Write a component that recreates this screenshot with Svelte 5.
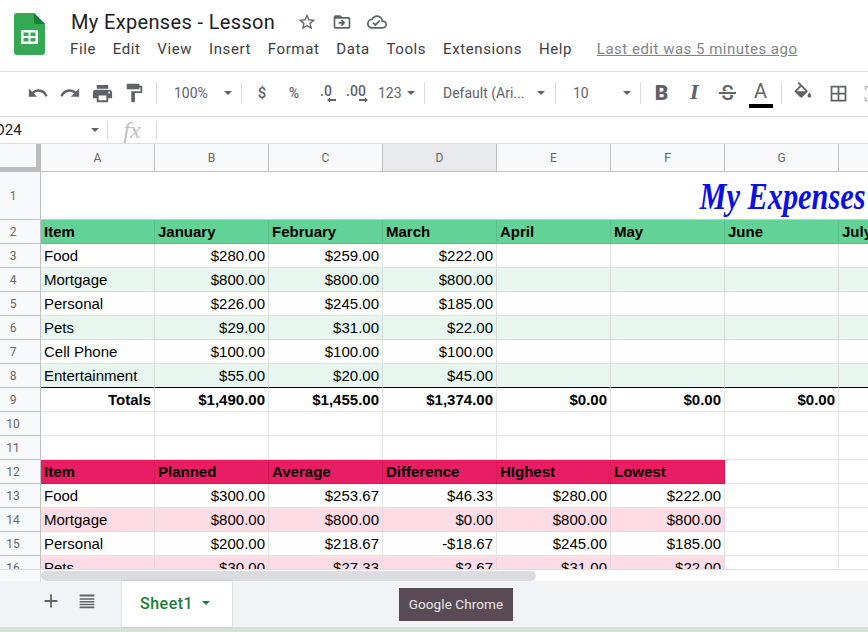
<script>
	const menus = ['File', 'Edit', 'View', 'Insert', 'Format', 'Data', 'Tools', 'Extensions', 'Help'];
	const cols = ['A', 'B', 'C', 'D', 'E', 'F', 'G', 'H'];

	// each row: number, tone, cells (missing ones are drawn blank up to H)
	const rows = [
		{ n: 2, tone: 'green', bold: true, cells: ['Item', 'January', 'February', 'March', 'April', 'May', 'June', 'July'], heading: true },
		{ n: 3, cells: ['Food', '$280.00', '$259.00', '$222.00'] },
		{ n: 4, tone: 'mint', cells: ['Mortgage', '$800.00', '$800.00', '$800.00', '', '', '', ''] },
		{ n: 5, cells: ['Personal', '$226.00', '$245.00', '$185.00'] },
		{ n: 6, tone: 'mint', cells: ['Pets', '$29.00', '$31.00', '$22.00', '', '', '', ''] },
		{ n: 7, cells: ['Cell Phone', '$100.00', '$100.00', '$100.00'] },
		{ n: 8, tone: 'mint', cells: ['Entertainment', '$55.00', '$20.00', '$45.00', '', '', '', ''], rule: true },
		{ n: 9, bold: true, cells: ['Totals', '$1,490.00', '$1,455.00', '$1,374.00', '$0.00', '$0.00', '$0.00'], totals: true },
		{ n: 10, cells: [] },
		{ n: 11, cells: [] },
		{ n: 12, tone: 'red', bold: true, cells: ['Item', 'Planned', 'Average', 'Difference', 'HIghest', 'Lowest'], heading: true },
		{ n: 13, cells: ['Food', '$300.00', '$253.67', '$46.33', '$280.00', '$222.00'] },
		{ n: 14, tone: 'pink', cells: ['Mortgage', '$800.00', '$800.00', '$0.00', '$800.00', '$800.00'] },
		{ n: 15, cells: ['Personal', '$200.00', '$218.67', '-$18.67', '$245.00', '$185.00'] },
		{ n: 16, tone: 'pink', cells: ['Pets', '$30.00', '$27.33', '$2.67', '$31.00', '$22.00'] }
	];

	const cellAt = (row, i) => row.cells[i] ?? '';
	const toneAt = (row, i) => (i < row.cells.length ? row.tone ?? '' : '');
	const alignAt = (row, i) => (row.heading || (i === 0 && !row.totals) ? 'left' : 'right');
</script>

<div class="page">
	<header class="top">
		<svg class="logo" viewBox="0 0 31 42" width="31" height="42" aria-hidden="true">
			<path d="M3 0h17l11 11v28a3 3 0 0 1-3 3H3a3 3 0 0 1-3-3V3a3 3 0 0 1 3-3z" fill="#34a853" />
			<path d="M20 0l11 11H22a2 2 0 0 1-2-2z" fill="#188038" />
			<path d="M7 17h17v14H7z M9.500 19.500v3.500h5v-3.500z M16.500 19.500v3.500h5v-3.500z M9.500 25v3.500h5V25z M16.500 25v3.500h5V25z" fill="#fff" fill-rule="evenodd" />
		</svg>
		<div class="doc">
			<div class="title-row">
				<span class="doc-title">My Expenses - Lesson</span>
				<div class="doc-icons">
					<svg viewBox="0 0 24 24" width="20" height="20"><path d="M22 9.240l-7.190-.620L12 2 9.190 8.630 2 9.240l5.460 4.730L5.820 21 12 17.270 18.180 21l-1.630-7.030L22 9.240zM12 15.400l-3.760 2.270 1-4.280-3.320-2.880 4.380-.380L12 6.100l1.710 4.040 4.380.380-3.320 2.880 1 4.280L12 15.400z" /></svg>
					<svg viewBox="0 0 24 24" width="20" height="20"><path d="M20 6h-8l-2-2H4c-1.100 0-2 .9-2 2v12c0 1.100.9 2 2 2h16c1.100 0 2-.9 2-2V8c0-1.100-.9-2-2-2zm0 12H4V8h16v10zm-8.010-9l-1.410 1.410L12.160 12H8v2h4.160l-1.590 1.590L11.990 17 16 13.010 11.990 9z" /></svg>
					<svg viewBox="0 0 24 24" width="20" height="20"><path d="M19.350 10.040C18.670 6.590 15.640 4 12 4 9.110 4 6.600 5.640 5.350 8.040 2.340 8.360 0 10.910 0 14c0 3.310 2.690 6 6 6h13c2.760 0 5-2.240 5-5 0-2.640-2.050-4.780-4.650-4.960zM19 18H6c-2.210 0-4-1.790-4-4 0-2.050 1.530-3.760 3.560-3.970l1.070-.110.5-.950C8.080 7.140 9.940 6 12 6c2.620 0 4.880 1.860 5.390 4.430l.3 1.500 1.530.110c1.560.1 2.780 1.410 2.780 2.960 0 1.650-1.350 3-3 3zm-9-3.820l-2.090-2.090L6.500 13.500 10 17l6.010-6.010-1.410-1.410z" /></svg>
				</div>
			</div>
			<nav class="menu">
				{#each menus as m}
					<span>{m}</span>
				{/each}
				<span class="last-edit">Last edit was 5 minutes ago</span>
			</nav>
		</div>
	</header>

	<div class="toolbar">
		<div class="tool"><svg viewBox="0 0 24 24" width="22" height="22"><path d="M12.500 8c-2.650 0-5.050.99-6.900 2.600L2 7v9h9l-3.620-3.620c1.390-1.160 3.160-1.880 5.120-1.880 3.540 0 6.550 2.310 7.600 5.500l2.370-.78C21.080 11.030 17.150 8 12.500 8z" /></svg></div>
		<div class="tool"><svg viewBox="0 0 24 24" width="22" height="22"><path d="M18.400 10.600C16.550 8.990 14.150 8 11.500 8c-4.650 0-8.580 3.030-9.960 7.220L3.900 16c1.050-3.190 4.050-5.500 7.600-5.500 1.950 0 3.730.72 5.120 1.880L13 16h9V7l-3.600 3.600z" /></svg></div>
		<div class="tool"><svg viewBox="0 0 24 24" width="23" height="23"><path d="M19 8H5c-1.660 0-3 1.340-3 3v6h4v4h12v-4h4v-6c0-1.660-1.340-3-3-3zm-3 11H8v-5h8v5zm3-7c-.55 0-1-.45-1-1s.45-1 1-1 1 .45 1 1-.45 1-1 1zm-1-9H6v4h12V3z" /></svg></div>
		<div class="tool"><svg viewBox="0 0 24 24" width="22" height="22"><path d="M18 4V3c0-.55-.45-1-1-1H5c-.55 0-1 .45-1 1v4c0 .55.45 1 1 1h12c.55 0 1-.45 1-1V6h1v4H9v11c0 .55.45 1 1 1h2c.55 0 1-.45 1-1v-9h8V4h-3z" /></svg></div>
		<i class="sep first"></i>
		<div class="drop zoom"><span>100%</span><b class="caret"></b></div>
		<i class="sep"></i>
		<div class="tool after-sep text">$</div>
		<div class="tool text small">%</div>
		<div class="tool decimals">
			<span>.0</span>
			<svg viewBox="0 0 10 6" width="9" height="6"><path d="M0 3l3.500-3v2H10v2H3.500v2z" /></svg>
		</div>
		<div class="tool decimals narrow">
			<span>.00</span>
			<svg class="right" viewBox="0 0 10 6" width="9" height="6"><path d="M10 3L6.500 0v2H0v2h6.500v2z" /></svg>
		</div>
		<div class="drop numfmt"><span>123</span><b class="caret"></b></div>
		<i class="sep"></i>
		<div class="drop font"><span>Default (Ari...</span><b class="caret"></b></div>
		<i class="sep"></i>
		<div class="drop size"><span>10</span><b class="caret"></b></div>
		<i class="sep"></i>
		<div class="tool after-sep glyph bold">B</div>
		<div class="tool glyph italic">I</div>
		<div class="tool glyph strike">S</div>
		<div class="tool glyph colour"><span>A</span><b></b></div>
		<i class="sep colour-sep"></i>
		<div class="tool bucket"><svg viewBox="0 0 24 24" width="22" height="22"><path fill-rule="evenodd" d="M16.560 8.940L7.620 0 6.210 1.410l2.380 2.380-5.150 5.150c-.59.59-.59 1.540 0 2.120l5.500 5.500c.29.29.68.44 1.060.44s.77-.15 1.060-.44l5.500-5.500c.59-.58.59-1.530 0-2.120zM5.210 10L10 5.210 14.790 10H5.210zM19 11.500s-2 2.170-2 3.500c0 1.100.9 2 2 2s2-.9 2-2c0-1.330-2-3.500-2-3.500z" /></svg></div>
		<div class="tool"><svg viewBox="0 0 24 24" width="21" height="21"><path d="M3 3v18h18V3H3zm8 16H5v-6h6v6zm0-8H5V5h6v6zm8 8h-6v-6h6v6zm0-8h-6V5h6v6z" /></svg></div>
		<div class="tool merge"><svg viewBox="0 0 24 24" width="21" height="21"><path d="M3 3h5v2H5v3H3z M16 3h5v5h-2V5h-3z M3 16h2v3h3v2H3z M19 16h2v5h-5v-2h3z" /></svg></div>
	</div>

	<div class="formula">
		<div class="namebox"><span>D24</span><b class="caret"></b></div>
		<i class="fsep"></i>
		<span class="fx">fx</span>
		<i class="fsep"></i>
	</div>

	<div class="sheet">
		<div class="grid">
			<div class="corner"></div>
			{#each cols as c}
				<div class="col-head" class:active={c === 'D'}>{c}</div>
			{/each}

			<div class="row-head">1</div>
			<div class="banner"><span>My Expenses</span></div>

			{#each rows as row}
				<div class="row-head">{row.n}</div>
				{#each cols as _, i}
					<div
						class="cell {toneAt(row, i)} {alignAt(row, i)}"
						class:bold={row.bold}
						class:rule={row.rule}
					>{cellAt(row, i)}</div>
				{/each}
			{/each}
		</div>
	</div>

	<div class="scroll">
		<div class="scroll-left"></div>
		<div class="thumb"></div>
	</div>

	<footer class="tabs">
		<svg class="add" viewBox="0 0 24 24" width="22" height="22"><path d="M19 13h-6v6h-2v-6H5v-2h6V5h2v6h6v2z" /></svg>
		<svg class="all" viewBox="0 0 24 24" width="22" height="22"><path d="M4 5h16v2H4z M4 9h16v1.500H4z M4 12h16v1.500H4z M4 15h16v1.500H4z M4 18h16v2H4z" /></svg>
		<div class="tab"><span>Sheet1</span><b class="caret green"></b></div>
		<div class="tooltip">Google Chrome</div>
	</footer>
	<div class="strip"></div>
</div>

<style>
	:global(body) {
		margin: 0;
		overflow: hidden;
		background: #fff;
	}

	.page {
		position: relative;
		width: 868px;
		height: 632px;
		overflow: hidden;
		font-family: Roboto, 'Liberation Sans', sans-serif;
		color: #3c4043;
	}

	svg {
		fill: #5f6368;
		display: block;
		flex-shrink: 0;
	}

	.caret {
		display: block;
		width: 0;
		height: 0;
		border-left: 4.500px solid transparent;
		border-right: 4.500px solid transparent;
		border-top: 4.500px solid #5f6368;
	}

	/* title bar */
	.top {
		display: flex;
		height: 58px;
		padding: 13px 0 0 14px;
		border-bottom: 1px solid #dadce0;
	}

	.logo {
		margin-right: 26px;
	}

	.doc {
		display: flex;
		flex-direction: column;
		margin-top: -3px;
	}

	.title-row {
		display: flex;
		align-items: center;
		height: 24px;
	}

	.doc-title {
		font-family: Roboto, sans-serif;
		font-size: 20px;
		letter-spacing: 0.35px;
		color: #202124;
		white-space: nowrap;
		width: 226px;
	}

	.doc-icons {
		display: flex;
		gap: 15px;
	}

	.menu {
		display: flex;
		margin: 5px 0 0 -1px;
		font-size: 15px;
		letter-spacing: 0.6px;
		color: #3c4043;
		line-height: 20px;
		white-space: nowrap;
		gap: 16.800px;
	}

	.last-edit {
		margin-left: 8px;
		letter-spacing: 0.5px;
		color: #80868b;
		text-decoration: underline;
	}

	/* toolbar */
	.toolbar {
		display: flex;
		align-items: center;
		height: 42px;
		padding: 0 0 2px 22px;
		border-bottom: 1px solid #dadce0;
		font-size: 14px;
		color: #5f6368;
		white-space: nowrap;
		overflow: hidden;
	}

	.tool {
		width: 32px;
		height: 30px;
		flex-shrink: 0;
		display: flex;
		align-items: center;
		justify-content: center;
	}

	.sep {
		width: 1px;
		height: 22px;
		background: #dadce0;
		flex-shrink: 0;
	}

	.sep.first {
		margin-left: 6px;
	}

	.sep.colour-sep {
		margin-left: 4px;
	}

	.drop {
		display: flex;
		align-items: center;
		justify-content: space-between;
		flex-shrink: 0;
		box-sizing: border-box;
	}

	.zoom {
		width: 84px;
		padding: 0 9px 0 17px;
	}

	.after-sep {
		margin-left: 4px;
	}

	.text {
		font-size: 15px;
		font-weight: 500;
	}

	.small {
		font-size: 14px;
	}

	.decimals {
		flex-direction: column;
		font-weight: 500;
		line-height: 14px;
	}

	.decimals svg {
		margin: -1px 0 0 11px;
	}

	.decimals svg.right {
		margin-left: 15px;
	}

	.narrow {
		width: 28px;
	}

	.numfmt {
		width: 54px;
		padding: 0 9px 0 8px;
	}

	.font {
		width: 130px;
		padding: 0 10px 0 18px;
	}

	.size {
		width: 84px;
		padding: 0 9px 0 17px;
	}

	.glyph {
		width: 33px;
		font-size: 20px;
		line-height: 1;
	}

	.bold {
		font-weight: 700;
	}

	.tool.bold {
		font-weight: 900;
		font-size: 21px;
	}

	.italic {
		font-family: 'DejaVu Serif', serif;
		font-style: italic;
		font-weight: 700;
		font-size: 18px;
	}

	.strike {
		position: relative;
		font-size: 20px;
		font-weight: 500;
	}

	.strike::after {
		content: '';
		position: absolute;
		left: 8px;
		right: 8px;
		top: 14px;
		height: 2px;
		background: #5f6368;
		box-shadow: 0 0 0 1px #fff;
	}

	.colour {
		flex-direction: column;
		margin-top: 2px;
		font-size: 20px;
		font-weight: 400;
	}

	.colour b {
		display: block;
		width: 24px;
		height: 4px;
		margin-top: 3px;
		background: #000;
	}

	.bucket {
		margin-left: 5px;
		margin-right: 3px;
	}

	.merge {
		margin-left: 2px;
	}

	.merge svg {
		fill: #bdc1c6;
	}

	/* name box and formula bar */
	.formula {
		display: flex;
		align-items: center;
		height: 26px;
		border-bottom: 1px solid #dadce0;
	}

	.namebox {
		display: flex;
		align-items: center;
		justify-content: space-between;
		width: 104px;
		margin-left: -5px;
		margin-right: 8px;
		font-size: 15px;
		color: #202124;
	}

	.fsep {
		width: 1px;
		height: 19px;
		background: #dadce0;
	}

	.fx {
		width: 48px;
		text-align: center;
		font-family: 'Liberation Serif', serif;
		font-style: italic;
		font-size: 24px;
		color: #bdc1c6;
		line-height: 26px;
	}

	/* sheet */
	.sheet {
		height: 425px;
		overflow: hidden;
		border-bottom: 1px solid #dadce0;
	}

	.grid {
		display: grid;
		grid-template-columns: 41px repeat(8, 114px);
		grid-template-rows: 28px 48px;
		grid-auto-rows: 24px;
		width: 953px;
		font-family: 'Liberation Sans', Arial, sans-serif;
		font-size: 15px;
		color: #000;
	}

	.corner {
		box-sizing: border-box;
		background: #f8f9fa;
		border-right: 5px solid #bdbdbd;
		border-bottom: 5px solid #bdbdbd;
	}

	.col-head {
		box-sizing: border-box;
		background: #f8f9fa;
		border-right: 1px solid #c0c0c0;
		border-bottom: 1px solid #c0c0c0;
		font-family: Roboto, sans-serif;
		font-size: 12px;
		color: #666;
		display: flex;
		align-items: center;
		justify-content: center;
	}

	.col-head.active {
		background: #e8eaed;
	}

	.row-head {
		box-sizing: border-box;
		background: #f8f9fa;
		border-right: 1px solid #c0c0c0;
		border-bottom: 1px solid #c0c0c0;
		font-family: Roboto, sans-serif;
		font-size: 12px;
		color: #666;
		display: flex;
		align-items: center;
		justify-content: center;
		padding-right: 14px;
	}

	/* the original cursive font is not installed: a narrowed bold italic stands in */
	.banner {
		grid-column: 2 / -1;
		box-sizing: border-box;
		padding-right: 88px;
		border-bottom: 1px solid #c8c8c8;
		text-align: right;
		font-family: 'Liberation Serif', serif;
		font-style: italic;
		font-weight: 700;
		font-size: 37px;
		line-height: 50px;
		color: #0a10e6;
		white-space: nowrap;
		overflow: hidden;
	}

	.banner span {
		display: inline-block;
		transform: scaleX(0.82);
		transform-origin: right center;
	}

	.cell {
		box-sizing: border-box;
		padding: 0 3px;
		border-right: 1px solid #e2e3e3;
		border-bottom: 1px solid #e2e3e3;
		line-height: 24px;
		white-space: nowrap;
		overflow: hidden;
	}

	.cell.left {
		text-align: left;
	}

	.cell.right {
		text-align: right;
	}

	.cell.green {
		background: #63d297;
		border-color: #5abf8a;
	}

	.cell.mint {
		background: #e7f6ee;
		border-color: #d5dbd7;
	}

	.cell.red {
		background: #e91d63;
		border-color: #d11b59;
	}

	.cell.pink {
		background: #fddce6;
		border-color: #e8d5da;
	}

	.cell.rule {
		border-bottom-color: #000;
	}

	/* scrollbar and tabs */
	.scroll {
		display: flex;
		height: 11px;
		background: #fff;
	}

	.scroll-left {
		width: 40px;
		background: #f8f9fa;
		border-right: 1px solid #dadce0;
	}

	.thumb {
		width: 495px;
		height: 10px;
		margin-top: 1px;
		border-radius: 5px;
		background: #dadce0;
	}

	.tabs {
		display: flex;
		align-items: flex-start;
		height: 46px;
		background: #f1f3f4;
	}

	.add {
		margin: 9px 0 0 40px;
	}

	.all {
		margin: 9px 0 0 14px;
	}

	.tab {
		display: flex;
		align-items: center;
		gap: 9px;
		box-sizing: border-box;
		width: 110px;
		height: 46px;
		margin-left: 24px;
		padding: 0 0 2px 18px;
		background: #fff;
		box-shadow: 0 0 2px rgba(60, 64, 67, 0.3);
		font-size: 16px;
		font-weight: 500;
		letter-spacing: 0.5px;
		color: #188038;
	}

	.caret.green {
		border-top-color: #188038;
	}

	.tooltip {
		position: absolute;
		left: 399px;
		top: 588px;
		width: 114px;
		height: 33px;
		padding-bottom: 1px;
		box-sizing: border-box;
		background: #5a4a55;
		color: #e8e8e8;
		font-size: 13.500px;
		letter-spacing: 0.1px;
		display: flex;
		align-items: center;
		justify-content: center;
	}

	.strip {
		height: 5px;
		background: #d5e3d6;
	}
</style>
